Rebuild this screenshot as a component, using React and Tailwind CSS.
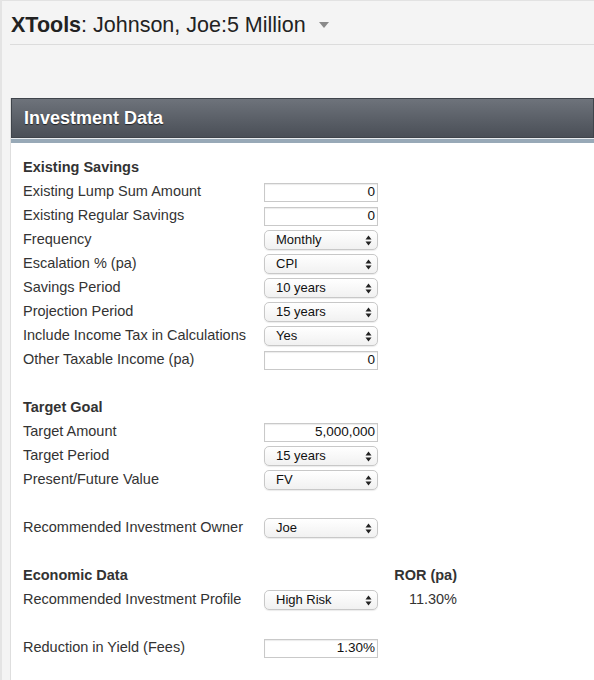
const SAVINGS = [
  { label: "Existing Lump Sum Amount", input: "0" },
  { label: "Existing Regular Savings", input: "0" },
  { label: "Frequency", select: "Monthly" },
  { label: "Escalation % (pa)", select: "CPI" },
  { label: "Savings Period", select: "10 years" },
  { label: "Projection Period", select: "15 years" },
  { label: "Include Income Tax in Calculations", select: "Yes" },
  { label: "Other Taxable Income (pa)", input: "0" },
]

const TARGET = [
  { label: "Target Amount", input: "5,000,000" },
  { label: "Target Period", select: "15 years" },
  { label: "Present/Future Value", select: "FV" },
]

export default function App() {
  return (
    <div
      className="min-h-[680px] border-l-2 border-[#e4e4e4] bg-[#f4f4f4] text-[#333]"
      style={{ fontFamily: '"Liberation Sans", Arial, sans-serif' }}
    >
      <div className="border-t border-[#e2e2e2] pl-[8px]">
        <div className="flex h-[44px] items-end border-b border-[#dcdcdc] pb-[6px]">
          <h1 className="pl-[1px] text-[21.5px] leading-[26px] text-[#222]">
            <span className="font-bold">XTools</span>: Johnson, Joe:5 Million
          </h1>
          <Caret />
        </div>

        <section className="mt-[53px] border-l border-[#dedede] bg-white">
          <div className="flex h-[40px] items-center border border-[#3f444b] bg-gradient-to-b from-[#6e737b] to-[#4a4f57] pl-[12px]">
            <h2 className="text-[18px] font-bold text-white [text-shadow:0_1px_1px_rgba(0,0,0,0.6)]">
              Investment Data
            </h2>
          </div>
          <div className="h-[1px] bg-[#e8ecef]" />
          <div className="h-[4px] bg-[#98a9b7]" />

          <div className="pb-[20px] pl-[12px] pt-[13px] text-[14.5px]">
            <Heading>Existing Savings</Heading>
            {SAVINGS.map((row) => (
              <Row key={row.label} {...row} />
            ))}
            <Blank />
            <Heading>Target Goal</Heading>
            {TARGET.map((row) => (
              <Row key={row.label} {...row} />
            ))}
            <Blank />
            <Row label="Recommended Investment Owner" select="Joe" />
            <Blank />
            <div className="grid h-[24px] grid-cols-[241px_114px_79px] items-center font-bold">
              <span>Economic Data</span>
              <span />
              <span className="text-right">ROR (pa)</span>
            </div>
            <Row label="Recommended Investment Profile" select="High Risk" extra="11.30%" />
            <Blank />
            <Row label="Reduction in Yield (Fees)" input="1.30%" />
          </div>
        </section>
      </div>
    </div>
  )
}

function Caret() {
  return (
    <svg width="12" height="8" viewBox="0 0 12 8" className="mb-[9px] ml-[12px]">
      <path d="M1 1h10L6 7z" fill="#8a8a8a" />
    </svg>
  )
}

function Heading({ children }) {
  return <div className="flex h-[24px] items-center font-bold">{children}</div>
}

function Blank() {
  return <div className="h-[24px]" />
}

function Row({ label, input, select, extra }) {
  return (
    <div className="grid h-[24px] grid-cols-[241px_114px_79px] items-center">
      <span>{label}</span>
      {input !== undefined ? <Field value={input} /> : <Select value={select} />}
      <span className="text-right">{extra}</span>
    </div>
  )
}

function Field({ value }) {
  return (
    <div className="flex h-[19px] items-center justify-end border border-[#c9c9c9] bg-white pr-[2px] text-[13.5px] text-[#111] shadow-[inset_0_1px_1px_rgba(0,0,0,0.08)]">
      {value}
    </div>
  )
}

function Select({ value }) {
  return (
    <div className="flex h-[20px] items-center justify-between rounded-[5px] border border-[#c8c8c8] bg-gradient-to-b from-white to-[#f1f1f1] pl-[11px] pr-[5px] text-[13px] text-[#111] shadow-[0_1px_1px_rgba(0,0,0,0.08)]">
      <span>{value}</span>
      <svg width="7" height="11" viewBox="0 0 7 11">
        <path d="M3.5 0.5L6.5 4.5H0.5z M3.5 10.5L0.5 6.5H6.5z" fill="#222" />
      </svg>
    </div>
  )
}
